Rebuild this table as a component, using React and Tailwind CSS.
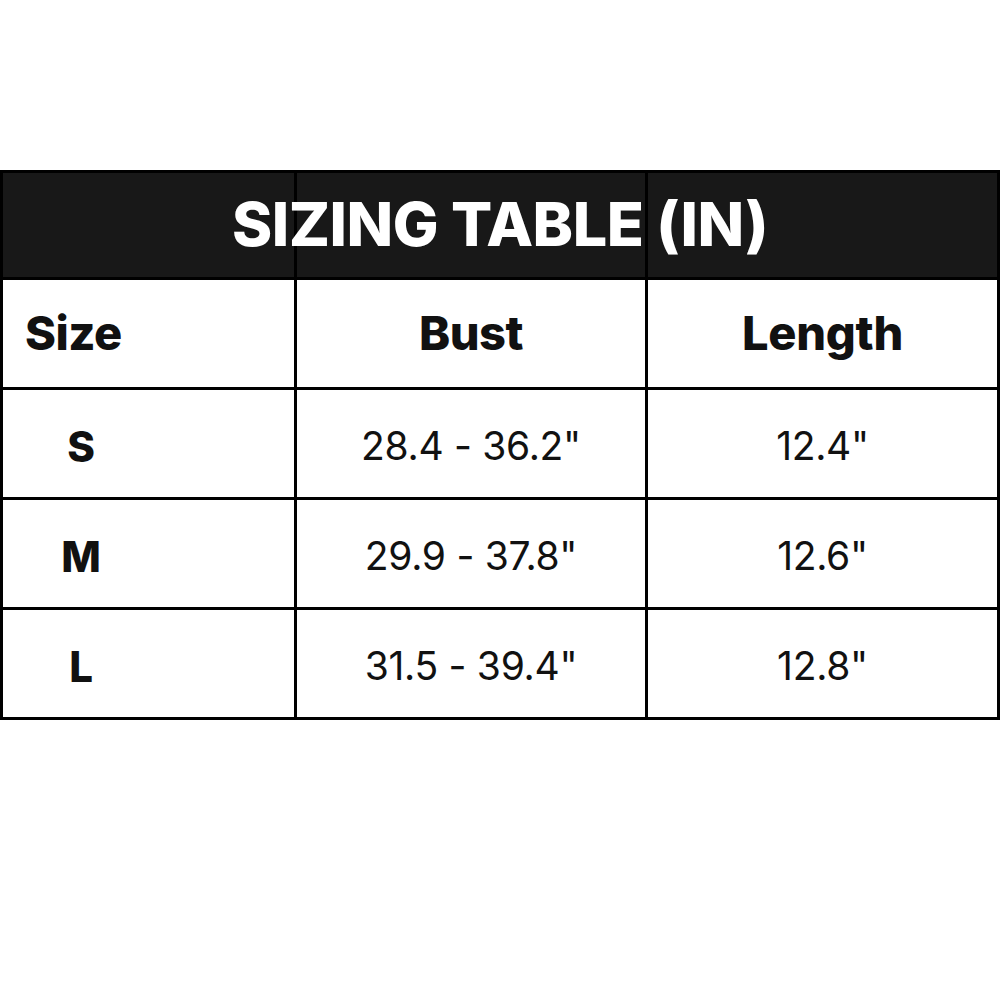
import { Fragment } from "react";

export default function App() {
  const font = { fontFamily: "Inter, 'Liberation Sans', sans-serif" };
  const rows = [
    ["S", "28.4 - 36.2\"", "12.4\""],
    ["M", "29.9 - 37.8\"", "12.6\""],
    ["L", "31.5 - 39.4\"", "12.8\""],
  ];
  return (
    <div className="w-[1000px] h-[1000px] bg-white pt-[170px]" style={font}>
      <div className="relative w-[1000px] bg-black p-[3px] grid grid-cols-[291px_348px_349px] gap-[3px] text-[#111]">
        <div className="h-[104px] bg-[#181818]" />
        <div className="h-[104px] bg-[#181818]" />
        <div className="h-[104px] bg-[#181818]" />
        <div className="absolute left-0 right-0 top-[3px] h-[104px] flex items-center justify-center text-white font-extrabold text-[61px] tracking-[-0.5px]">
          SIZING TABLE (IN)
        </div>
        <div className="h-[107px] bg-white flex items-center pl-[22px] font-extrabold text-[47px] tracking-[-0.5px]">Size</div>
        <div className="h-[107px] bg-white flex items-center justify-center font-extrabold text-[47px] tracking-[-0.5px]">Bust</div>
        <div className="h-[107px] bg-white flex items-center justify-center font-extrabold text-[47px] tracking-[-0.3px]">Length</div>
        {rows.map((r) => (
          <Fragment key={r[0]}>
            <div className="h-[107px] bg-white flex items-center pt-[6px]">
              <div className="w-[156px] text-center font-extrabold text-[42px]">{r[0]}</div>
            </div>
            <div className="h-[107px] bg-white flex items-center justify-center pt-[6px] text-[39px] tracking-[-0.3px]">{r[1]}</div>
            <div className="h-[107px] bg-white flex items-center justify-center pt-[6px] text-[39px] tracking-[-0.3px]">{r[2]}</div>
          </Fragment>
        ))}
      </div>
    </div>
  );
}
